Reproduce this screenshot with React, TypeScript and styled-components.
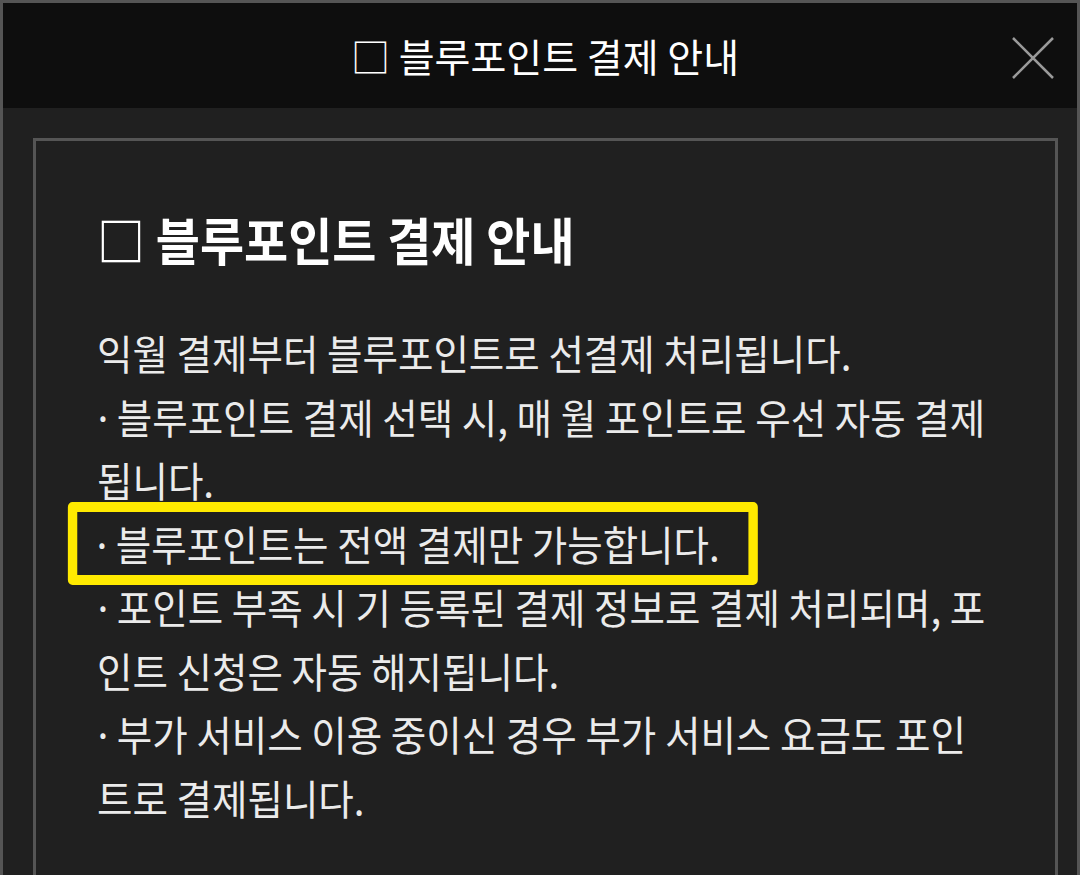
import styled, { createGlobalStyle } from "styled-components";

// glyphs in the reference are a bit narrower than Noto's hangul
const BODY_SCALE = 0.94;

const GlobalStyle = createGlobalStyle`
  html, body {
    margin: 0;
    padding: 0;
    background: #202020;
    overflow: hidden;
  }
  body {
    font-family: "Noto Sans CJK KR", "Noto Sans", sans-serif;
  }
`;

const Frame = styled.div`
  box-sizing: border-box;
  width: 1080px;
  height: 875px;
  border: 3px solid #555555;
  border-bottom: none;
  background: #202020;
  overflow: hidden;
  display: flex;
  flex-direction: column;
`;

const Header = styled.header`
  position: relative;
  height: 105px;
  flex-shrink: 0;
  background: #0e0e0e;
  display: flex;
  align-items: center;
  justify-content: center;
  padding-left: 10px;
`;

const HeaderTitle = styled.h1`
  margin: 0;
  color: #ffffff;
  font-size: 39px;
  font-weight: 400;
  line-height: 1;
  white-space: nowrap;
`;

const CloseButton = styled.button`
  position: absolute;
  right: 23px;
  top: 34px;
  width: 42px;
  height: 42px;
  padding: 0;
  border: none;
  background: transparent;
  cursor: pointer;
`;

const Body = styled.main`
  flex: 1;
  padding: 30px 19px 0 30px;
`;

const InfoBox = styled.section`
  box-sizing: border-box;
  min-height: 900px;
  border: 3px solid #555555;
  padding: 65px 55px 0 61px;
`;

const Content = styled.div`
  width: calc(100% / ${BODY_SCALE});
  transform: scaleX(${BODY_SCALE});
  transform-origin: left top;
`;

const Heading = styled.h2`
  margin: 0 0 49px;
  color: #ffffff;
  font-size: 51px;
  font-weight: 700;
  line-height: 66px;
`;

const Line = styled.p<{ $boxed?: boolean; $bullet?: boolean }>`
  margin: 0;
  color: #ebebeb;
  font-size: 41px;
  font-weight: 400;
  line-height: 63.5px;
  word-break: break-all;
  ${(p) =>
    p.$bullet &&
    `
    text-indent: -5px;
    &::before {
      content: "·";
      margin-right: 3px;
    }
  `}
  ${(p) =>
    p.$boxed &&
    `
    width: fit-content;
    margin: -10px 0 -10px -31px;
    padding: 0 31px 0 20px;
    border: 10px solid #ffea00;
    border-left-width: 10.6px;
    border-right-width: 10.6px;
    border-radius: 5px;
  `}
`;

export default function App() {
  return (
    <>
      <GlobalStyle />
      <Frame>
        <Header>
          <HeaderTitle>□ 블루포인트 결제 안내</HeaderTitle>
          <CloseButton aria-label="닫기">
            <svg width="42" height="42" viewBox="0 0 42 42">
              <path d="M1 1 L41 41 M41 1 L1 41" stroke="#9a9a9a" strokeWidth="2.5" />
            </svg>
          </CloseButton>
        </Header>
        <Body>
          <InfoBox>
            <Content>
              <Heading>□ 블루포인트 결제 안내</Heading>
              <Line>익월 결제부터 블루포인트로 선결제 처리됩니다.</Line>
              <Line $bullet>블루포인트 결제 선택 시, 매 월 포인트로 우선 자동 결제 됩니다.</Line>
              <Line $bullet $boxed>블루포인트는 전액 결제만 가능합니다.</Line>
              <Line $bullet>포인트 부족 시 기 등록된 결제 정보로 결제 처리되며, 포인트 신청은 자동 해지됩니다.</Line>
              <Line $bullet>부가 서비스 이용 중이신 경우 부가 서비스 요금도 포인트로 결제됩니다.</Line>
            </Content>
          </InfoBox>
        </Body>
      </Frame>
    </>
  );
}
